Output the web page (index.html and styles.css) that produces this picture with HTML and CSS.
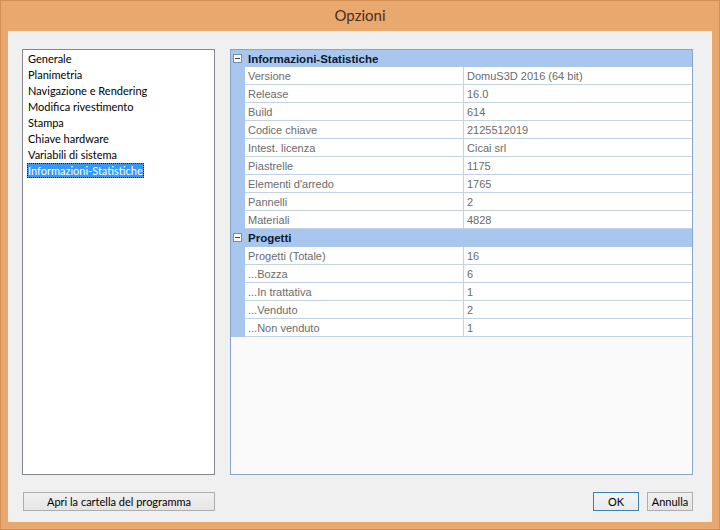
FILE: index.html
```html
<!DOCTYPE html>
<html>
<head>
<meta charset="utf-8">
<link rel="stylesheet" href="styles.css">
</head>
<body>
<div class="window">
  <div class="titlebar">Opzioni</div>
  <div class="client">
    <div class="panels">
      <div class="list">
        <div class="item"><span>Generale</span></div>
        <div class="item"><span>Planimetria</span></div>
        <div class="item"><span>Navigazione e Rendering</span></div>
        <div class="item"><span>Modifica rivestimento</span></div>
        <div class="item"><span>Stampa</span></div>
        <div class="item"><span>Chiave hardware</span></div>
        <div class="item"><span>Variabili di sistema</span></div>
        <div class="item selected"><span>Informazioni-Statistiche</span></div>
      </div>
      <div class="grid">
        <div class="section first">
          <div class="gutter"><span class="minus"></span></div>
          <div class="section-title">Informazioni-Statistiche</div>
        </div>
        <div class="row"><div class="gutter"></div><div class="name">Versione</div><div class="value">DomuS3D 2016 (64 bit)</div></div>
        <div class="row"><div class="gutter"></div><div class="name">Release</div><div class="value">16.0</div></div>
        <div class="row"><div class="gutter"></div><div class="name">Build</div><div class="value">614</div></div>
        <div class="row"><div class="gutter"></div><div class="name">Codice chiave</div><div class="value">2125512019</div></div>
        <div class="row"><div class="gutter"></div><div class="name">Intest. licenza</div><div class="value">Cicai srl</div></div>
        <div class="row"><div class="gutter"></div><div class="name">Piastrelle</div><div class="value">1175</div></div>
        <div class="row"><div class="gutter"></div><div class="name">Elementi d'arredo</div><div class="value">1765</div></div>
        <div class="row"><div class="gutter"></div><div class="name">Pannelli</div><div class="value">2</div></div>
        <div class="row"><div class="gutter"></div><div class="name">Materiali</div><div class="value">4828</div></div>
        <div class="section">
          <div class="gutter"><span class="minus"></span></div>
          <div class="section-title">Progetti</div>
        </div>
        <div class="row"><div class="gutter"></div><div class="name">Progetti (Totale)</div><div class="value">16</div></div>
        <div class="row"><div class="gutter"></div><div class="name">...Bozza</div><div class="value">6</div></div>
        <div class="row"><div class="gutter"></div><div class="name">...In trattativa</div><div class="value">1</div></div>
        <div class="row"><div class="gutter"></div><div class="name">...Venduto</div><div class="value">2</div></div>
        <div class="row"><div class="gutter"></div><div class="name">...Non venduto</div><div class="value">1</div></div>
      </div>
    </div>
    <div class="footer">
      <button class="btn btn-wide">Apri la cartella del programma</button>
      <div class="spacer"></div>
      <button class="btn btn-small btn-default">OK</button>
      <button class="btn btn-small">Annulla</button>
    </div>
  </div>
</div>
</body>
</html>
```

FILE: styles.css
```css
html, body {
  margin: 0;
  padding: 0;
}
body {
  width: 720px;
  height: 530px;
  background: #e9a96e;
  font-family: Lato, "Liberation Sans", sans-serif;
  overflow: hidden;
}
.window {
  width: 720px;
  height: 530px;
  box-sizing: border-box;
  display: flex;
  flex-direction: column;
  box-shadow: inset 0 0 0 1px #d38e55;
}
.titlebar {
  height: 31px;
  display: flex;
  align-items: center;
  justify-content: center;
  font-size: 15px;
  color: #4a2f1d;
  padding-bottom: 1px;
  box-sizing: border-box;
}
.client {
  flex: 1;
  margin: 0 8px 8px 8px;
  background: #f0f0f0;
  padding: 18px 19px 11px 14px;
  display: flex;
  flex-direction: column;
  box-sizing: border-box;
}
.panels {
  flex: 1;
  display: flex;
  gap: 15px;
}
.list {
  width: 193px;
  box-sizing: border-box;
  border: 1px solid #828790;
  background: #fff;
  padding: 1px 0 0 4px;
}
.item {
  height: 16px;
  line-height: 16px;
  font-size: 11px;
  color: #000;
}
.item span {
  padding: 0 1px;
  display: inline-block;
  height: 15px;
  line-height: 15px;
}
.item.selected span {
  background: #3399ff;
  color: #fff;
  outline: 1px dotted #1a1a1a;
  outline-offset: -1px;
}
.grid {
  flex: 1;
  box-sizing: border-box;
  border: 1px solid #8aa4c6;
  background: #fafafa;
  font-family: "Liberation Sans", Arial, sans-serif;
  font-size: 11px;
}
.section {
  display: flex;
  height: 18px;
  background: #a9c7ee;
  align-items: center;
}
.section.first {
  height: 17px;
}
.section .gutter {
  position: relative;
  height: 100%;
}
.gutter {
  width: 14px;
  flex: none;
  background: #a9c7ee;
  align-self: stretch;
}
.minus {
  position: absolute;
  left: 2px;
  top: 4px;
  width: 7px;
  height: 7px;
  border: 1px solid #7d8ea6;
  background: #f7f9fc;
}
.minus::after {
  content: "";
  position: absolute;
  left: 1px;
  right: 1px;
  top: 3px;
  height: 1px;
  background: #3a4a60;
}
.section-title {
  padding-left: 3px;
  font-weight: bold;
  font-size: 11.5px;
  color: #0a1a33;
}
.row {
  display: flex;
  height: 18px;
  background: #fff;
}
.name, .value {
  box-sizing: border-box;
  border-bottom: 1px solid #c3d1e4;
  padding-top: 1px;
  line-height: 16px;
  padding-left: 3px;
  color: #6b6b6b;
  white-space: nowrap;
}
.name {
  width: 219px;
  border-right: 1px solid #c3d1e4;
}
.value {
  flex: 1;
}
.footer {
  display: flex;
  margin-top: 17px;
  gap: 8px;
  align-items: center;
}
.spacer {
  flex: 1;
}
.btn {
  height: 19px;
  box-sizing: border-box;
  border: 1px solid #adadad;
  background: linear-gradient(#f0f0f0, #e5e5e5);
  font-family: Lato, "Liberation Sans", sans-serif;
  font-size: 11px;
  color: #000;
  padding: 0;
  margin: 0;
  line-height: 16px;
}
.btn-wide {
  width: 192px;
  margin-left: 1px;
}
.btn-small {
  width: 46px;
}
.btn-default {
  border-color: #3c7fb1;
  background: linear-gradient(#f2f4f6, #e8ebee);
}
```
